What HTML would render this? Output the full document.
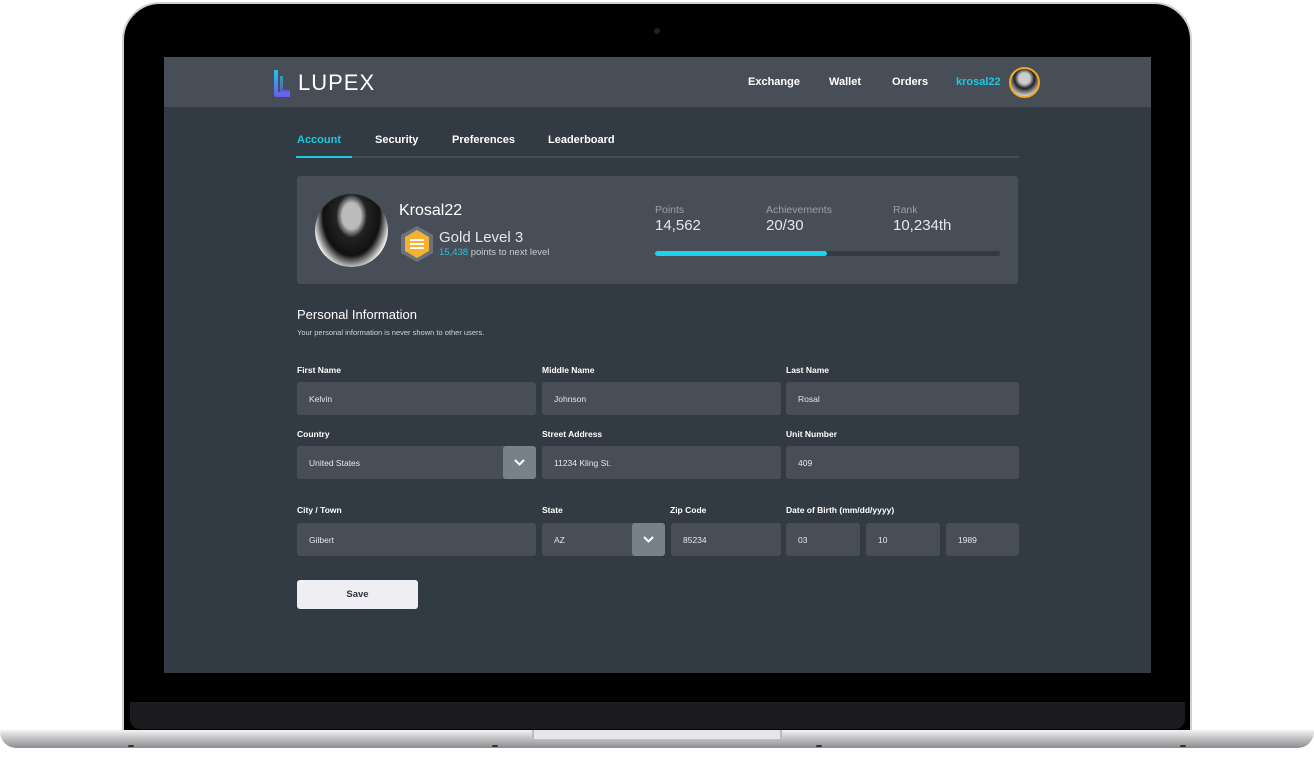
<!DOCTYPE html>
<html><head><meta charset="utf-8"><style>
*{margin:0;padding:0;box-sizing:border-box}
body{width:1314px;height:760px;background:#fff;position:relative;overflow:hidden;font-family:"Liberation Sans",sans-serif}
.a{position:absolute}
.lid{left:122px;top:2px;width:1070px;height:730px;background:#000;border-radius:38px 38px 0 0;border:2px solid #cfd0d3}
.chin{left:130px;top:702px;width:1055px;height:27px;background:#1c1b1e;border-radius:0 0 10px 10px}
.base{left:0;top:730px;width:1314px;height:18px;background:linear-gradient(#f4f4f6,#c9c9cc 40%,#8d8d90);border-radius:4px 4px 40px 40px}
.notch{left:532px;top:730px;width:250px;height:9px;background:#e7e7ea;border-left:2px solid #bbb;border-right:2px solid #bbb}
.scr{left:164px;top:57px;width:987px;height:616px;background:#323a44;overflow:hidden}
.hdr{left:0;top:0;width:987px;height:50px;background:#474e57}
.nav{color:#fff;font-weight:bold;font-size:11px}
.lbl{color:#fff;font-weight:bold;font-size:8.5px}
.inp{background:#474e57;border-radius:3px;height:33px;color:#e5e7ea;font-size:8.5px;padding:12px 0 0 12px}
.dd{background:#78808a;border-radius:3px;width:33px;height:33px}
.dd svg{position:absolute;left:10px;top:11px}
</style></head><body>
<div class="a lid"></div>
<div class="a" style="left:654px;top:28px;width:6px;height:6px;border-radius:50%;background:#222"></div>
<div class="a chin"></div>
<div class="a base"></div>
<div class="a notch"></div>
<div class="a" style="left:128px;top:745px;width:6px;height:2px;background:#333;border-radius:2px"></div>
<div class="a" style="left:492px;top:745px;width:6px;height:2px;background:#333;border-radius:2px"></div>
<div class="a" style="left:816px;top:745px;width:6px;height:2px;background:#333;border-radius:2px"></div>
<div class="a" style="left:1180px;top:745px;width:6px;height:2px;background:#333;border-radius:2px"></div>
<div class="a scr">
 <div class="a hdr"></div>
 <svg class="a" style="left:110px;top:13px" width="16" height="28"><defs><linearGradient id="g" x1="0" y1="0" x2="0" y2="1"><stop offset="0" stop-color="#22c6e0"/><stop offset="1" stop-color="#6a5cf0"/></linearGradient></defs><path d="M0 0h4v22h12v5H3Q0 27 0 24Z" fill="url(#g)"/><path d="M6 6h3v14h7v3H8Q6 23 6 21Z" fill="url(#g)" opacity=".7"/></svg>
 <div class="a" style="left:134px;top:13px;color:#fff;font-size:22px;letter-spacing:1px">LUPEX</div>
 <div class="a nav" style="left:584px;top:19px">Exchange</div>
 <div class="a nav" style="left:665px;top:19px">Wallet</div>
 <div class="a nav" style="left:728px;top:19px">Orders</div>
 <div class="a nav" style="left:792px;top:19px;color:#1cc8e0">krosal22</div>
 <div class="a" style="left:845px;top:10px;width:31px;height:31px;border-radius:50%;background:radial-gradient(circle at 50% 35%,#ccc 0 25%,#222 45%,#ddd 80%);border:2px solid #f0a823"></div>
 <div class="a nav" style="left:133px;top:77px;color:#1cc8e0">Account</div>
 <div class="a nav" style="left:211px;top:77px">Security</div>
 <div class="a nav" style="left:288px;top:77px">Preferences</div>
 <div class="a nav" style="left:384px;top:77px">Leaderboard</div>
 <div class="a" style="left:132px;top:99px;width:723px;height:2px;background:#474e57"></div>
 <div class="a" style="left:132px;top:99px;width:56px;height:2px;background:#1cc8e0"></div>
 <div class="a" style="left:133px;top:119px;width:721px;height:108px;background:#474e57;border-radius:3px"></div>
 <div class="a" style="left:151px;top:137px;width:73px;height:73px;border-radius:50%;background:radial-gradient(ellipse at 50% 30%,#bbb 0 18%,#222 30%,#111 55%,#eee 75%)"></div>
 <div class="a" style="left:235px;top:145px;color:#fff;font-size:16px">Krosal22</div>
 <svg class="a" style="left:236px;top:168px" width="34" height="38"><polygon points="17,1 33,10 33,28 17,37 1,28 1,10" fill="#6b737c"/><polygon points="17,5 29,12 29,26 17,33 5,26 5,12" fill="#f5b130"/><rect x="10" y="14" width="14" height="2" fill="#fff"/><rect x="10" y="18" width="14" height="2" fill="#fff"/><rect x="10" y="22" width="14" height="2" fill="#fff"/></svg>
 <div class="a" style="left:275px;top:172px;color:#e5e7ea;font-size:15px">Gold Level 3</div>
 <div class="a" style="left:275px;top:190px;color:#c8ccd1;font-size:9.5px"><span style="color:#1cc8e0">15,438</span> points to next level</div>
 <div class="a" style="left:491px;top:147px;color:#9aa0a8;font-size:10.5px">Points</div>
 <div class="a" style="left:491px;top:160px;color:#e5e7ea;font-size:15px">14,562</div>
 <div class="a" style="left:602px;top:147px;color:#9aa0a8;font-size:10.5px">Achievements</div>
 <div class="a" style="left:602px;top:160px;color:#e5e7ea;font-size:15px">20/30</div>
 <div class="a" style="left:729px;top:147px;color:#9aa0a8;font-size:10.5px">Rank</div>
 <div class="a" style="left:729px;top:160px;color:#e5e7ea;font-size:15px">10,234th</div>
 <div class="a" style="left:491px;top:194px;width:345px;height:5px;border-radius:3px;background:#323a44"></div>
 <div class="a" style="left:491px;top:194px;width:172px;height:5px;border-radius:3px;background:#1cd4ea"></div>
 <div class="a" style="left:133px;top:250px;color:#fff;font-size:13px">Personal Information</div>
 <div class="a" style="left:133px;top:271px;color:#d0d3d7;font-size:7.5px">Your personal information is never shown to other users.</div>

 <div class="a lbl" style="left:133px;top:308px">First Name</div>
 <div class="a lbl" style="left:378px;top:308px">Middle Name</div>
 <div class="a lbl" style="left:622px;top:308px">Last Name</div>
 <div class="a inp" style="left:133px;top:325px;width:239px">Kelvin</div>
 <div class="a inp" style="left:378px;top:325px;width:239px">Johnson</div>
 <div class="a inp" style="left:622px;top:325px;width:233px">Rosal</div>

 <div class="a lbl" style="left:133px;top:372px">Country</div>
 <div class="a lbl" style="left:378px;top:372px">Street Address</div>
 <div class="a lbl" style="left:622px;top:372px">Unit Number</div>
 <div class="a inp" style="left:133px;top:389px;width:239px">United States</div>
 <div class="a dd" style="left:339px;top:389px"><svg width="13" height="10"><path d="M2 3l4.5 4.5L11 3" stroke="#fff" stroke-width="2" fill="none"/></svg></div>
 <div class="a inp" style="left:378px;top:389px;width:239px">11234 Kling St.</div>
 <div class="a inp" style="left:622px;top:389px;width:233px">409</div>

 <div class="a lbl" style="left:133px;top:448px">City / Town</div>
 <div class="a lbl" style="left:378px;top:448px">State</div>
 <div class="a lbl" style="left:506px;top:448px">Zip Code</div>
 <div class="a lbl" style="left:622px;top:448px">Date of Birth (mm/dd/yyyy)</div>
 <div class="a inp" style="left:133px;top:466px;width:239px">Gilbert</div>
 <div class="a inp" style="left:378px;top:466px;width:123px">AZ</div>
 <div class="a dd" style="left:468px;top:466px"><svg width="13" height="10"><path d="M2 3l4.5 4.5L11 3" stroke="#fff" stroke-width="2" fill="none"/></svg></div>
 <div class="a inp" style="left:507px;top:466px;width:110px">85234</div>
 <div class="a inp" style="left:622px;top:466px;width:74px">03</div>
 <div class="a inp" style="left:702px;top:466px;width:74px">10</div>
 <div class="a inp" style="left:782px;top:466px;width:73px">1989</div>

 <div class="a" style="left:133px;top:523px;width:121px;height:29px;background:#eeeef3;border-radius:3px;color:#2d333b;font-weight:bold;font-size:9.5px;text-align:center;line-height:30px">Save</div>
</div>
</body></html>
